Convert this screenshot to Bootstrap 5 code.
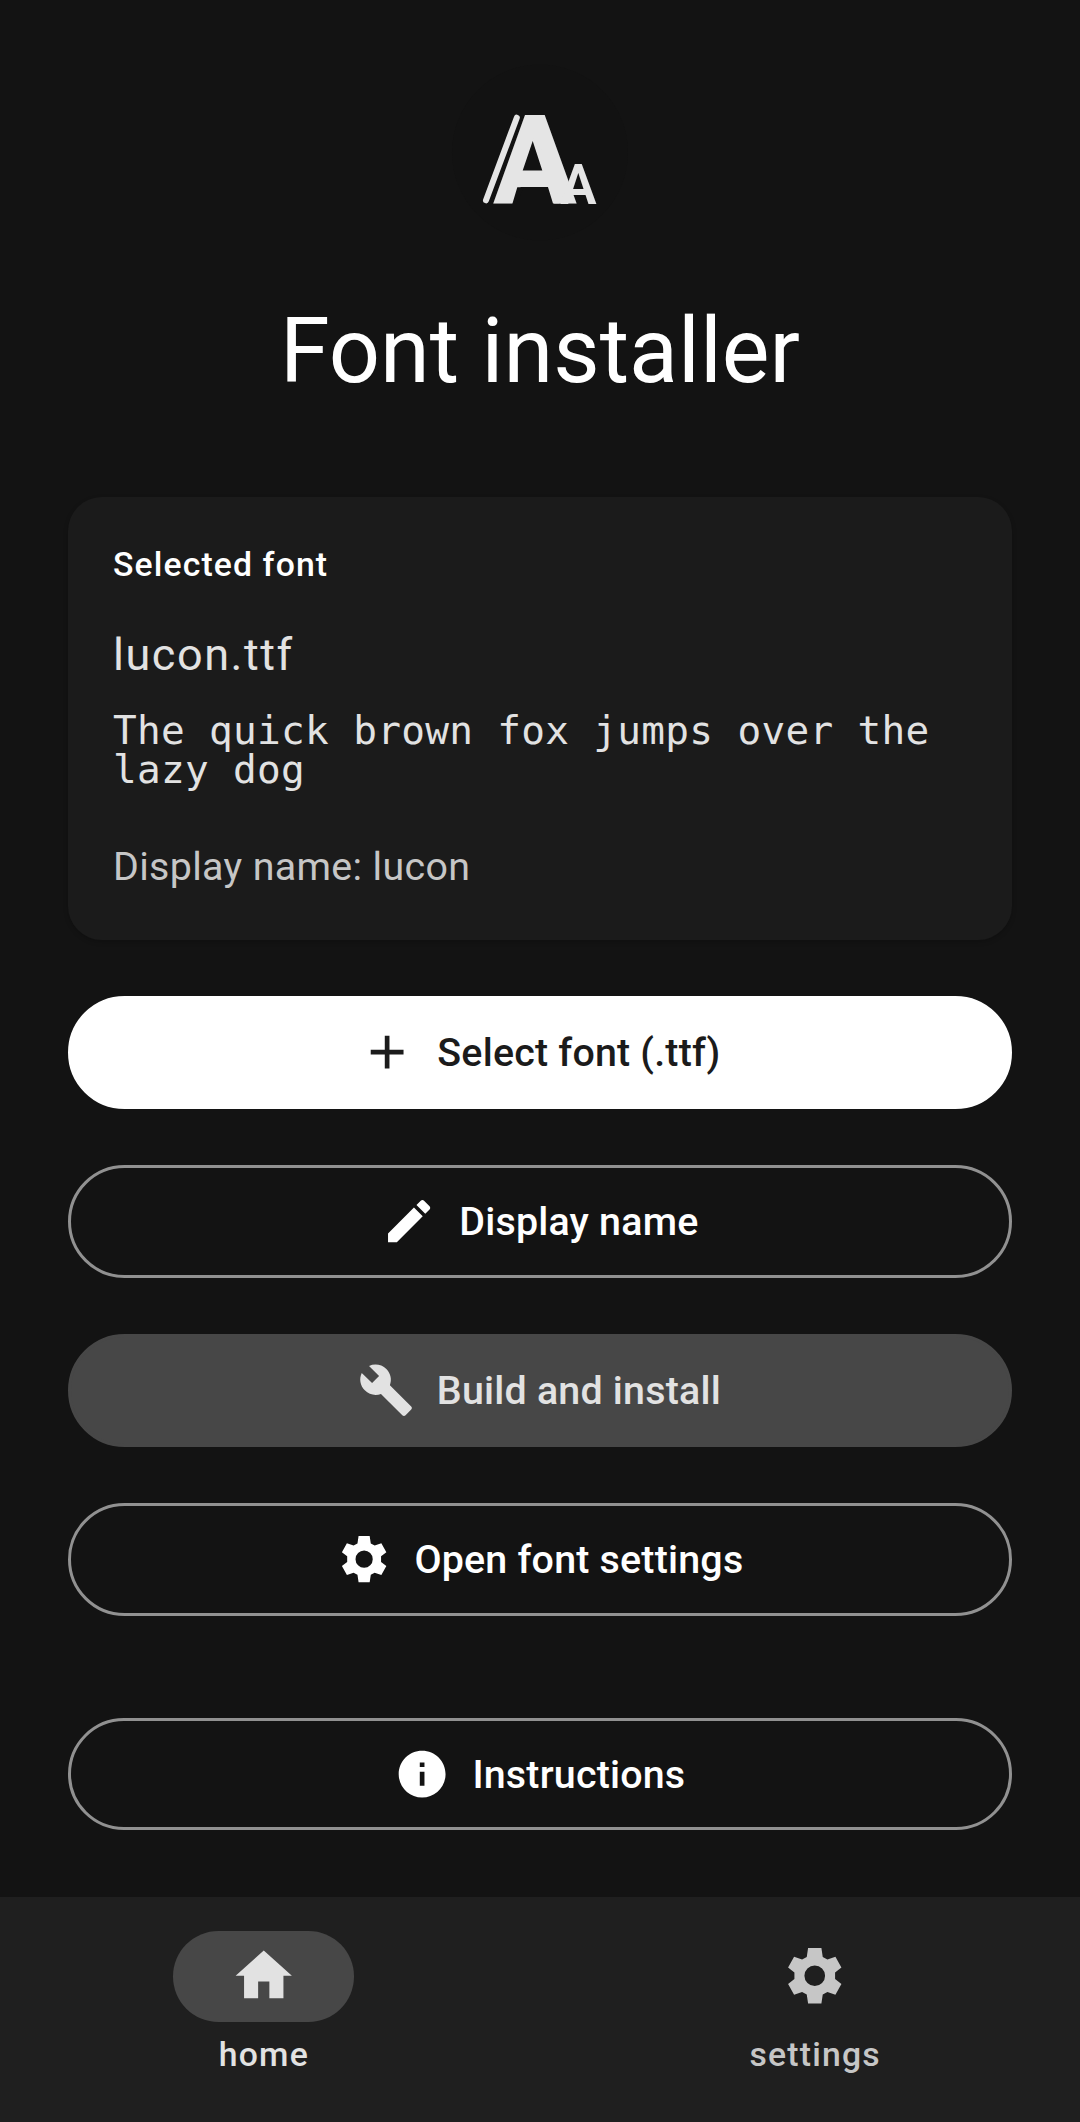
<!DOCTYPE html>
<html lang="en" data-bs-theme="dark">
<head>
<meta charset="utf-8">
<meta name="viewport" content="width=device-width, initial-scale=1">
<title>Font installer</title>
<link href="https://cdn.jsdelivr.net/npm/bootstrap@5.3.0/dist/css/bootstrap.min.css" rel="stylesheet">
<style>
  body { background: #131313; color: #e2e2e2; font-family: Roboto, sans-serif; }
  .app { min-height: 2122px; }
  .screen { padding: 62px 68px 0; }
  .app-logo { width: 200px; height: 180px; overflow: visible; }
  .app-title { font-size: 90px; line-height: 112px; font-weight: 400; color: #fff; margin: 54px 0 89px; }
  .font-card { --bs-card-bg: #1b1b1b; --bs-card-border-width: 0; --bs-card-border-radius: 34px; height: 443px; box-shadow: 0 2px 5px rgba(0,0,0,.2); }
  .font-card .card-body { padding: 45px; }
  .section-label { font-size: 33.75px; line-height: 45px; font-weight: 500; letter-spacing: 1.12px; color: #fff; margin-bottom: 34px; }
  .file-name { font-size: 45px; line-height: 67px; letter-spacing: 1.55px; margin-bottom: 23px; }
  .preview { font-family: "DejaVu Sans Mono", monospace; font-size: 39.4px; line-height: 39px; letter-spacing: .3px; margin-bottom: 50px; }
  .shown-name { font-size: 39.4px; line-height: 56px; letter-spacing: .33px; color: #c6c6c6; }
  .actions { margin-top: 56px; gap: 56px; }
  .action { height: 113px; gap: 22.5px; font-size: 39.4px; line-height: 56px; font-weight: 500; letter-spacing: .2px; border-width: 3px; padding: 0 1px 0 0;
    --bs-btn-color: #fff; --bs-btn-border-color: #919191; }
  .action-main { --bs-btn-color: #1b1b1b; --bs-btn-bg: #fff; --bs-btn-border-color: #fff; }
  .action-tonal { --bs-btn-color: #e2e2e2; --bs-btn-bg: #474747; --bs-btn-border-color: #474747; }
  .action svg { width: 56.25px; height: 56.25px; }
  .action-last { margin-top: 46px; height: 112px; padding-top: 1px; }
  .bottom-bar { height: 225px; background: #1f1f1f; padding: 34px 1px 0 0; gap: 23.5px; }
  .tab-item { color: #c6c6c6; font-size: 33.75px; line-height: 45px; font-weight: 500; letter-spacing: 1.2px; padding: 0; }
  .tab-item svg { width: 67.5px; height: 67.5px; margin-bottom: 1px; }
  .tab-pill { width: 181px; height: 91px; margin-bottom: 10px; }
  .tab-item.active { color: #e2e2e2; }
  .tab-item.active .tab-pill { background: #474747; }
</style>
<script src="https://cdn.jsdelivr.net/npm/bootstrap@5.3.0/dist/js/bootstrap.bundle.min.js"></script>
</head>
<body>
<svg class="d-none" xmlns="http://www.w3.org/2000/svg">
  <symbol id="gear" viewBox="-101.25 -101.25 202.5 202.5"><path fill-rule="evenodd" d="M-20-83H20L24-56 38-49 62-57 80-25 61-10V10L80 25 62 57 38 49 24 56 20 83H-20L-24 56-38 49-62 57-80 25-61 10V-10L-80-25-62-57-38-49-24-56ZM0-31a31 31 0 1 0 0 62 31 31 0 1 0 0-62Z"/></symbol>
</svg>
<div class="app d-flex flex-column">
  <main class="screen flex-grow-1">
    <header class="text-center">
      <svg class="app-logo d-block mx-auto" viewBox="0 -18.500 200 180" fill="#e5e5e5">
        <circle cx="100" cy="72" r="88" fill="#121212"/>
        <path d="M76.8 37.2 46 119.8" stroke="#e5e5e5" stroke-width="6" stroke-linecap="round"/>
        <text transform="translate(53.5 123) scale(.98 1)" font-family="Roboto, sans-serif" font-weight="900" font-size="124">A<tspan x="67.8" font-weight="600" font-size="56">A</tspan></text>
        <!-- inner facets that give the large letter its lighter left leg -->
        <path d="M94 58h5l7 33H84ZM107.800 106h8l4 17h-6.800Z"/>
        <path fill="#121212" d="M92.7 60.5 102.3 90H82.7ZM77.300 106.650H84l-7.500 16.850h-4.200Z"/>
      </svg>
      <h1 class="app-title">Font installer</h1>
    </header>
    <section class="card font-card">
      <div class="card-body">
        <h2 class="section-label">Selected font</h2>
        <p class="file-name">lucon.ttf</p>
        <p class="preview">The quick brown fox jumps over the lazy dog</p>
        <p class="shown-name mb-0">Display name: lucon</p>
      </div>
    </section>
    <div class="actions d-flex flex-column">
      <button class="btn action action-main rounded-pill d-flex align-items-center justify-content-center" type="button">
        <svg viewBox="0 0 24 24" fill="currentColor"><path d="M19 13h-6v6h-2v-6H5v-2h6V5h2v6h6z"/></svg>Select font (.ttf)</button>
      <button class="btn action rounded-pill d-flex align-items-center justify-content-center" type="button">
        <svg viewBox="0 0 24 24" fill="currentColor"><path d="M3 17.25V21h3.75L17.81 9.94l-3.75-3.75L3 17.25zM20.71 7.04c.39-.39.39-1.02 0-1.41l-2.34-2.34c-.39-.39-1.02-.39-1.41 0l-1.83 1.83 3.75 3.75 1.83-1.83z"/></svg>Display name</button>
      <button class="btn action action-tonal rounded-pill d-flex align-items-center justify-content-center" type="button">
        <svg viewBox="0 0 24 24" fill="currentColor"><path d="M22.7 19l-9.1-9.1c.9-2.3.4-5-1.5-6.9-2-2-5-2.4-7.4-1.3L9 6 6 9 1.6 4.7C.4 7.1.9 10.1 2.9 12.1c1.9 1.9 4.6 2.4 6.9 1.5l9.1 9.1c.4.4 1 .4 1.4 0l2.3-2.3c.5-.4.5-1.1.1-1.4z"/></svg>Build and install</button>
      <button class="btn action rounded-pill d-flex align-items-center justify-content-center" type="button">
        <svg fill="currentColor"><use href="#gear"/></svg>Open font settings</button>
      <button class="btn action action-last rounded-pill d-flex align-items-center justify-content-center" type="button">
        <svg viewBox="0 0 24 24" fill="currentColor"><path d="M12 2C6.48 2 2 6.48 2 12s4.48 10 10 10 10-4.48 10-10S17.52 2 12 2zm1 15h-2v-6h2v6zm0-8h-2V7h2v2z"/></svg>Instructions</button>
    </div>
  </main>
  <nav class="bottom-bar nav nav-justified flex-nowrap align-items-start">
    <a class="nav-link tab-item active d-flex flex-column align-items-center flex-fill" href="#">
      <span class="tab-pill rounded-pill d-flex align-items-center justify-content-center"><svg viewBox="0 0 24 24" fill="currentColor"><path d="M10 20v-6h4v6h5v-8h3L12 3 2 12h3v8z"/></svg></span>home</a>
    <a class="nav-link tab-item d-flex flex-column align-items-center flex-fill" href="#">
      <span class="tab-pill rounded-pill d-flex align-items-center justify-content-center"><svg fill="currentColor"><use href="#gear"/></svg></span>settings</a>
  </nav>
</div>
</body>
</html>
